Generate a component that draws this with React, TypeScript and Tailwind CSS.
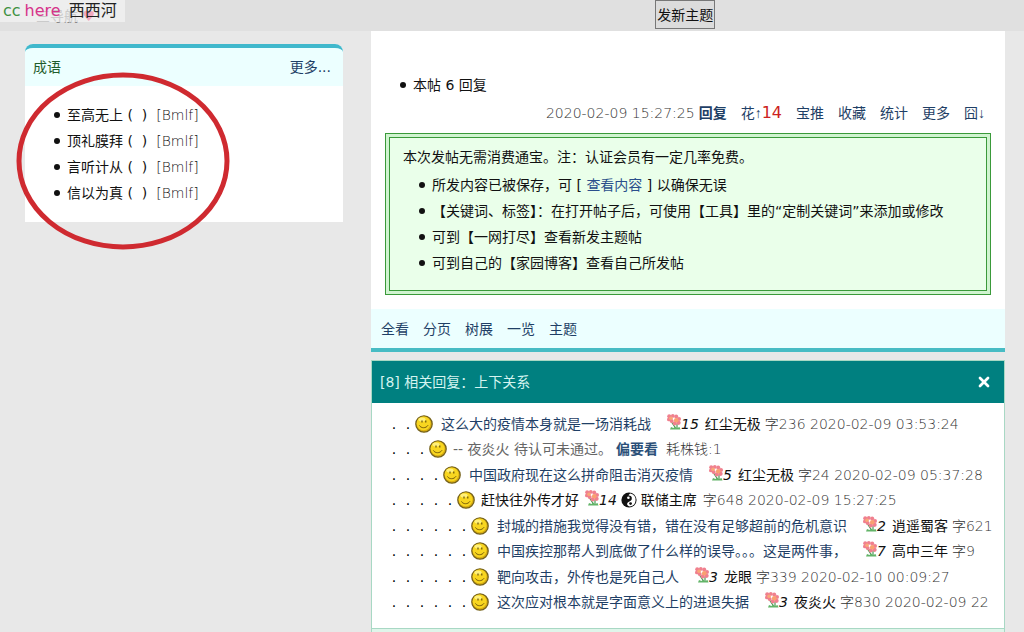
import React from 'react';
import { X } from 'lucide-react';

interface Reply {
  depth: number;
  title: string;
  link?: boolean;
  flowers: string;
  author: string;
  info: string;
  badge?: boolean;
  pending?: boolean;
}

const idioms = ['至高无上', '顶礼膜拜', '言听计从', '信以为真'];

const actions = ['宝推', '收藏', '统计', '更多'];

const views = ['全看', '分页', '树展', '一览', '主题'];

const replies: Reply[] = [
  { depth: 2, title: '这么大的疫情本身就是一场消耗战', link: true, flowers: '15', author: '红尘无极', info: '字236 2020-02-09 03:53:24' },
  { depth: 3, title: '-- 夜炎火 待认可未通过。', flowers: '', author: '', info: '耗株钱:1', pending: true },
  { depth: 4, title: '中国政府现在这么拼命阻击消灭疫情', link: true, flowers: '5', author: '红尘无极', info: '字24 2020-02-09 05:37:28' },
  { depth: 5, title: '赶快往外传才好', flowers: '14', author: '联储主席', info: '字648 2020-02-09 15:27:25', badge: true },
  { depth: 6, title: '封城的措施我觉得没有错，错在没有足够超前的危机意识', link: true, flowers: '2', author: '逍遥蜀客', info: '字621' },
  { depth: 6, title: '中国疾控那帮人到底做了什么样的误导。。。这是两件事，', link: true, flowers: '7', author: '高中三年', info: '字9' },
  { depth: 6, title: '靶向攻击，外传也是死自己人', link: true, flowers: '3', author: '龙眼', info: '字339 2020-02-10 00:09:27' },
  { depth: 6, title: '这次应对根本就是字面意义上的进退失据', link: true, flowers: '3', author: '夜炎火', info: '字830 2020-02-09 22' },
];

function Smiley() {
  return (
    <svg viewBox="0 0 18 18" className="h-[18px] w-[18px] shrink-0">
      <circle cx="9" cy="9" r="8.2" fill="#d9ae10" stroke="#75621c" strokeWidth="1.3" />
      <circle cx="8.6" cy="8.3" r="6.9" fill="#f8d620" />
      <ellipse cx="7" cy="4.6" rx="3.6" ry="2" fill="#fff07a" />
      <path d="M7 5.4v2.2M10.8 5.4v2.2" stroke="#5a4508" strokeWidth="1.1" />
      <path d="M4.4 10.4c1.5 3 6.600 3.200 8.700-.2" fill="none" stroke="#7a5f0a" strokeWidth="1" />
    </svg>
  );
}

function FlowerIcon() {
  return (
    <svg viewBox="0 0 14 16" className="mb-1 h-4 w-[14px] shrink-0">
      <path d="M4.500 8l4 6M10 10v4" stroke="#4e9a56" strokeWidth="1.2" />
      <path d="M3 15.500l1-2.500 2.500 1 1.500-1.500 2 1.500 2.500-1 1 2.500z" fill="#62b468" />
      <g fill="#f0808e">
        <circle cx="2.2" cy="2.2" r="2" />
        <circle cx="5.8" cy="1.9" r="1.9" />
        <circle cx="1.9" cy="5.4" r="1.9" />
        <circle cx="4.6" cy="7" r="2" />
        <circle cx="9.2" cy="2.6" r="2" />
        <circle cx="12" cy="5" r="2" />
        <circle cx="11.6" cy="8.8" r="2.1" />
        <circle cx="7.8" cy="9.4" r="2.1" />
      </g>
      <circle cx="4" cy="4.200" r="1.800" fill="#f9a878" />
      <circle cx="9.200" cy="6.200" r="2.300" fill="#f9a070" />
    </svg>
  );
}

function TaijiIcon() {
  return (
    <svg viewBox="0 0 16 16" className="mx-1 h-4 w-4 shrink-0">
      <circle cx="8" cy="8" r="7.6" fill="#111" />
      <path d="M9.5 1.5a6.6 6.6 0 0 1-1 13c-2.8-.6-3-3.3-1-4.4 2-1 3.600-1.700 3.300-4.300-.2-1.700-1.900-2.500-3.200-2.300.3-1 1-1.700 1.900-2z" fill="#fff" />
      <circle cx="9.6" cy="11.6" r="1.4" fill="#111" />
      <circle cx="7.4" cy="5.8" r="1.3" fill="#fff" />
    </svg>
  );
}

function Bullet({ children }: { children: React.ReactNode }) {
  return (
    <li className="flex items-center before:mr-[7px] before:h-[6px] before:w-[6px] before:shrink-0 before:rounded-full before:bg-[#111]">
      <span>{children}</span>
    </li>
  );
}

function ReplyRow({ reply }: { reply: Reply }) {
  return (
    <li className="flex items-center overflow-hidden whitespace-nowrap">
      {Array.from({ length: reply.depth }, (_, i) => (
        <span key={i} className="w-[14px] shrink-0 text-center text-black">.</span>
      ))}
      <Smiley />
      {reply.link ? (
        <a href="#" className="ml-2 mr-4 text-[#1f3f66]">{reply.title}</a>
      ) : (
        <span className={reply.pending ? 'ml-1.5 mr-1 text-[#666]' : 'mx-1.5'}>{reply.title}</span>
      )}
      {reply.pending ? (
        <a href="#" className="mr-2 font-bold text-[#2b4f78]">偏要看</a>
      ) : (
        <>
          <FlowerIcon />
          <em>{reply.flowers}</em>
          {reply.badge ? <TaijiIcon /> : null}
          <a href="#" className={reply.badge ? 'mr-1.5' : 'ml-1.5 mr-1'}>{reply.author}</a>
        </>
      )}
      <span className="font-extralight text-[#333]">{reply.info}</span>
    </li>
  );
}

export default function App() {
  return (
    <div className="h-screen overflow-hidden bg-[#e8e8e8] font-['DejaVu_Sans','Noto_Sans_CJK_SC',sans-serif] text-sm text-[#111]">
      <header className="relative h-[31px] bg-[#e0e0e0]">
        <div className="pl-9 pt-1.5 text-sm leading-5 text-[#888]">三导航 <span className="text-[#ee3366]">♥</span></div>
        {/* site name floats above the menu */}
        <a href="#" className="absolute left-0 top-0 flex h-[22px] w-[125px] items-center gap-1 bg-[#f6f6f6]/60 pl-[3px] text-base">
          <span className="text-[#3f9142]">cc</span>
          <span className="mr-1 text-[#d6338a]">here</span>
          <span className="text-[#222]">西西河</span>
        </a>
        <button className="absolute left-[64%] top-0 h-[29px] border border-[#777] bg-[#dcdcdc] px-px">发新主题</button>
      </header>

      <div className="flex items-start gap-7 pl-[25px] pr-[19px]">
        <aside className="relative mt-[13px] w-[318px] shrink-0 rounded-t-lg bg-white pb-4">
          <div className="flex h-[42px] items-center justify-between rounded-t-lg border-t-4 border-[#40b8cc] bg-[#ecffff] pl-2 pr-3">
            <h3 className="text-[#1f5c2c]">成语</h3>
            <a href="#" className="text-[#1f3f66]">更多...</a>
          </div>
          <ul className="mt-4 pl-[29px] leading-[26px]">
            {idioms.map((idiom) => (
              <Bullet key={idiom}>
                {idiom} (&nbsp; ) &nbsp;<span className="font-extralight">[Bmlf]</span>
              </Bullet>
            ))}
          </ul>
          {/* hand-drawn marker ring */}
          <svg viewBox="0 0 214 178" className="absolute -left-[9px] top-[28px] h-[178px] w-[214px]">
            <ellipse cx="107" cy="89" rx="104" ry="86" fill="none" stroke="#cf2a30" strokeWidth="5" />
          </svg>
        </aside>

        <main className="min-w-0 flex-1">
          <article className="border-b-4 border-[#48bcc4] bg-white pt-[41px]">
            <ul className="pl-[29px] leading-[26px]">
              <Bullet>本帖 6 回复</Bullet>
            </ul>
            <div className="mt-1 flex h-[22px] items-center justify-end pr-5 leading-[22px] text-[#1f3f66]">
              <span className="mr-1 font-extralight text-[#333]">2020-02-09 15:27:25</span>
              <a href="#" className="mr-[14px] font-bold">回复</a>
              <a href="#" className="font-['Liberation_Sans','Noto_Sans_CJK_SC',sans-serif]">花↑</a>
              <span className="mr-[14px] text-base text-[#cc2222]">14</span>
              {actions.map((action) => (
                <a key={action} href="#" className="mr-[14px]">{action}</a>
              ))}
              <a href="#" className="font-['Liberation_Sans','Noto_Sans_CJK_SC',sans-serif]">囧↓</a>
            </div>
            {/* thin double frame */}
            <section className="mx-[14px] mt-[9px] border border-[#3a9a3a] bg-[#d0f4d0] p-[3px]">
              <div className="border border-[#3a9a3a] bg-[#eaffea] pb-[14px] pl-[13px] pt-[6px] leading-[26px]">
                <p>本次发帖无需消费通宝。注：认证会员有一定几率免费。</p>
                <ul className="mt-[2px] pl-4">
                  <Bullet>所发内容已被保存，可 [ <a href="#" className="text-[#2b4f8c]">查看内容</a> ] 以确保无误</Bullet>
                  <Bullet>【关键词、标签】：在打开帖子后，可使用【工具】里的“定制关键词”来添加或修改</Bullet>
                  <Bullet>可到【一网打尽】查看新发主题帖</Bullet>
                  <Bullet>可到自己的【家园博客】查看自己所发帖</Bullet>
                </ul>
              </div>
            </section>
            <nav className="mt-[14px] flex h-[39px] items-center gap-[14px] bg-[#ecffff] pl-[10px] text-[#1f3f66]">
              {views.map((view) => (
                <a key={view} href="#">{view}</a>
              ))}
            </nav>
          </article>

          <section className="mt-2 border border-[#a8d8c4] bg-white">
            <div className="flex h-[42px] items-center justify-between bg-[#008080] pl-2 pr-3 text-[#d4f4f0]">
              <h3>[8] 相关回复：上下关系</h3>
              <button aria-label="关闭" className="text-white">
                <X size={16} strokeWidth={4} />
              </button>
            </div>
            <ul className="grid min-h-[225px] auto-rows-fr pb-[13px] pl-[15px] pr-2 pt-2">
              {replies.map((reply) => (
                <ReplyRow key={reply.title} reply={reply} />
              ))}
            </ul>
            <div className="h-4 border-t border-[#a8d8c4] bg-[#dff5ea]" />
          </section>
        </main>
      </div>
    </div>
  );
}
